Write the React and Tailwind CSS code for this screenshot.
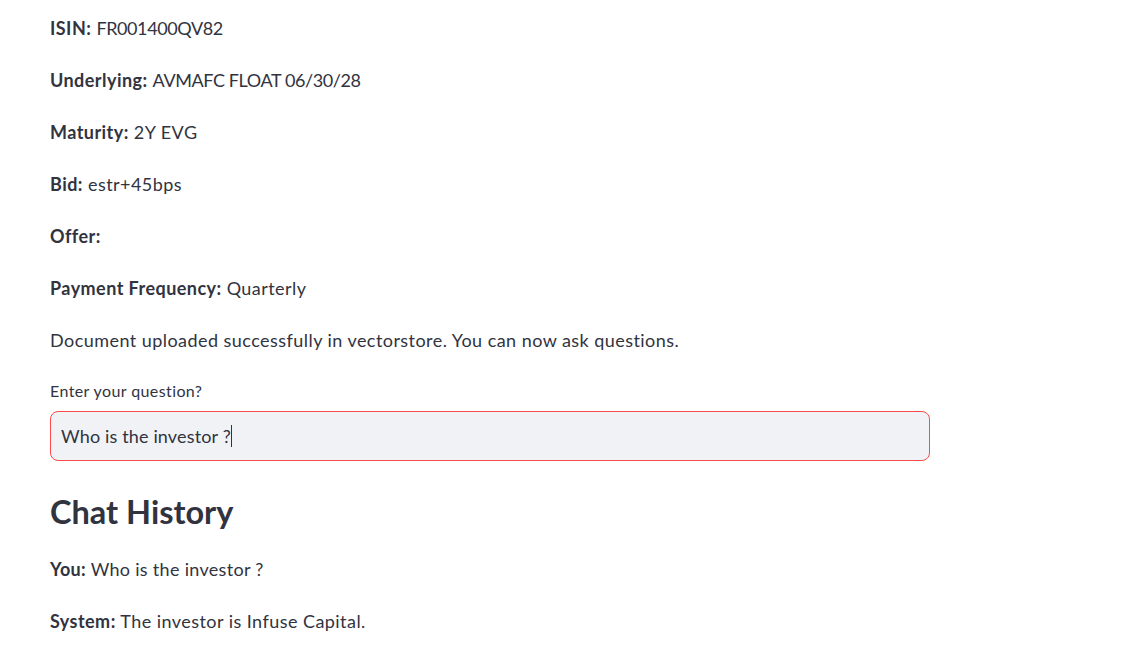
export default function App() {
  const rows = [
    ["ISIN:", "FR001400QV82", "tracking-[-0.4px]"],
    ["Underlying:", "AVMAFC FLOAT 06/30/28", "tracking-[-0.4px]"],
    ["Maturity:", "2Y EVG", ""],
    ["Bid:", "estr+45bps", ""],
    ["Offer:", "", ""],
    ["Payment Frequency:", "Quarterly", ""],
  ];

  return (
    <div className="min-h-screen bg-white text-[#31333f] font-['Lato','Liberation_Sans',sans-serif]">
      <div className="w-[880px] ml-[50px] pt-[15px] flex flex-col">
        {/* DETAILS */}
        {rows.map(([label, value, valueTracking]) => (
          <p key={label} className="text-[18px] leading-[26px] tracking-[0.45px] mb-[26px]">
            <b className="font-bold">{label}</b> <span className={valueTracking}>{value}</span>
          </p>
        ))}
        <p className="text-[18px] leading-[26px] tracking-[0.45px] mb-[28px]">
          Document uploaded successfully in vectorstore. You can now ask questions.
        </p>

        {/* QUESTION INPUT */}
        <label className="text-[16px] leading-[20px] tracking-[0.4px] mb-[10px]">Enter your question?</label>
        <div className="h-[50px] rounded-lg border border-[#ff4b4b] bg-[#f0f2f6] px-[10px] flex items-center">
          <span className="text-[18px] tracking-[0.15px]">Who is the investor ?</span>
          <span className="w-px h-[22px] bg-[#31333f]" />
        </div>

        {/* CHAT HISTORY */}
        <h2 className="text-[32.5px] font-bold leading-[40px] mt-[31px] mb-[24px]">Chat History</h2>
        <p className="text-[18px] leading-[26px] tracking-[0.3px] mb-[26px]">
          <b className="font-bold">You:</b> Who is the investor ?
        </p>
        <p className="text-[18px] leading-[26px] tracking-[0.45px]">
          <b className="font-bold">System:</b> The investor is Infuse Capital.
        </p>
      </div>
    </div>
  );
}
